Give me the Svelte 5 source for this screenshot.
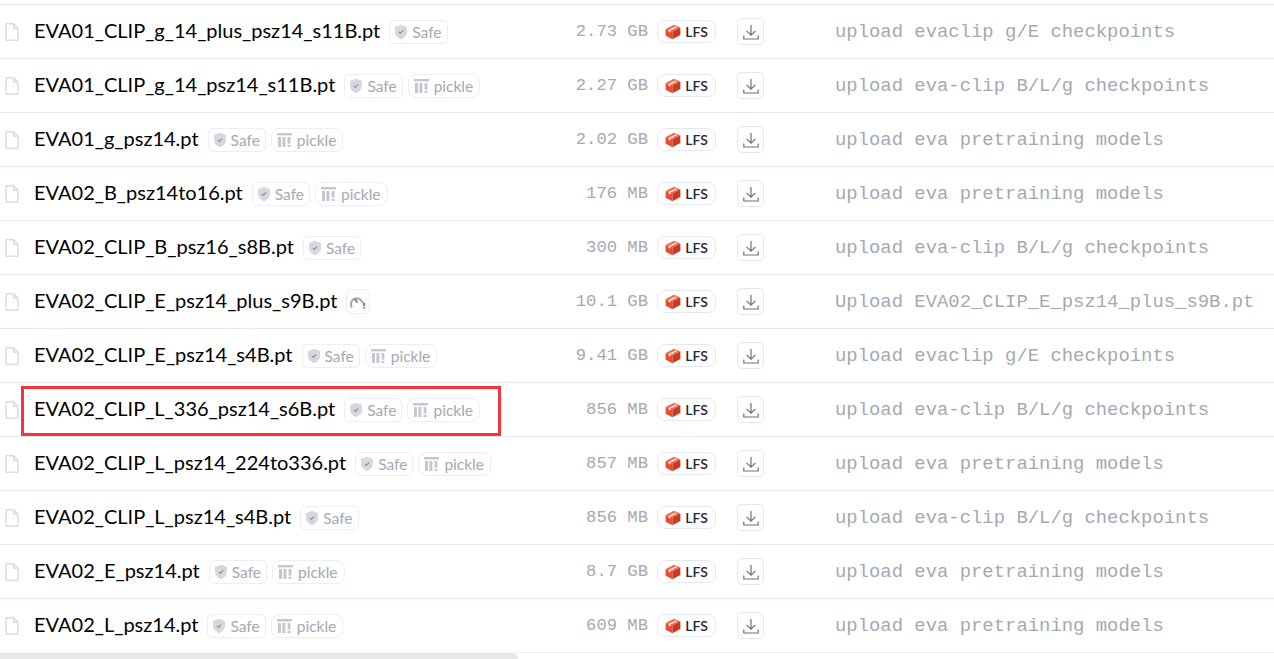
<script>
  const files = [
    { name: 'EVA01_CLIP_g_14_plus_psz14_s11B.pt', size: '2.73 GB', commit: 'upload evaclip g/E checkpoints', pickle: false },
    { name: 'EVA01_CLIP_g_14_psz14_s11B.pt', size: '2.27 GB', commit: 'upload eva-clip B/L/g checkpoints', pickle: true },
    { name: 'EVA01_g_psz14.pt', size: '2.02 GB', commit: 'upload eva pretraining models', pickle: true },
    { name: 'EVA02_B_psz14to16.pt', size: '176 MB', commit: 'upload eva pretraining models', pickle: true },
    { name: 'EVA02_CLIP_B_psz16_s8B.pt', size: '300 MB', commit: 'upload eva-clip B/L/g checkpoints', pickle: false },
    { name: 'EVA02_CLIP_E_psz14_plus_s9B.pt', size: '10.1 GB', commit: 'Upload EVA02_CLIP_E_psz14_plus_s9B.pt', pickle: false, unscanned: true },
    { name: 'EVA02_CLIP_E_psz14_s4B.pt', size: '9.41 GB', commit: 'upload evaclip g/E checkpoints', pickle: true },
    { name: 'EVA02_CLIP_L_336_psz14_s6B.pt', size: '856 MB', commit: 'upload eva-clip B/L/g checkpoints', pickle: true },
    { name: 'EVA02_CLIP_L_psz14_224to336.pt', size: '857 MB', commit: 'upload eva pretraining models', pickle: true },
    { name: 'EVA02_CLIP_L_psz14_s4B.pt', size: '856 MB', commit: 'upload eva-clip B/L/g checkpoints', pickle: false },
    { name: 'EVA02_E_psz14.pt', size: '8.7 GB', commit: 'upload eva pretraining models', pickle: true },
    { name: 'EVA02_L_psz14.pt', size: '609 MB', commit: 'upload eva pretraining models', pickle: true }
  ];
</script>

<div class="page">
  <ul class="list">
    {#each files as file}
      <li class="row">
        <div class="name-cell">
          <svg class="file-icon" viewBox="0 0 14 18" width="14" height="18" fill="none">
            <path d="M1 1.5 a.8 .8 0 0 1 .8-.8 H8.6 L13 5.2 V16.5 a.8 .8 0 0 1-.8 .8 H1.8 a.8 .8 0 0 1-.8-.8 Z M8.6 .8 V5.2 H13" stroke="#d9dce3" stroke-width="1.5" stroke-linejoin="round" />
          </svg>
          <span class="name">{file.name}</span>
          {#if file.unscanned}
            <span class="badge warn">
              <svg viewBox="0 0 16 14" width="16" height="14" fill="none">
                <path d="M2 12.5 A5.8 5.8 0 1 1 12.4 8" stroke="#a8adb7" stroke-width="2.2" />
                <path d="M7.4 7.6 L4.8 3.8" stroke="#5f6672" stroke-width="1.5" />
                <path d="M14 7.5 V11 M14 12 V13.6" stroke="#ef2b2b" stroke-width="1.6" />
              </svg>
            </span>
          {:else}
            <span class="badge safe">
              <svg viewBox="0 0 14 16" width="14" height="16">
                <path d="M7 .8 L13 3 V8 C13 11.6 10 14 7 15.2 C4 14 1 11.6 1 8 V3 Z" fill="#d5d8de" />
                <path d="M4.8 7.8 L6.4 9.4 L9.2 6.4" fill="none" stroke="#8b93a1" stroke-width="1.2" />
              </svg>
              Safe
            </span>
            {#if file.pickle}
              <span class="badge pickle">
                <svg viewBox="0 0 16 16" width="16" height="16" fill="#c3c7cf">
                  <rect x="0" y="1" width="15" height="2.4" />
                  <rect x="1" y="5" width="3" height="10" />
                  <rect x="5.4" y="5" width="3" height="10" />
                  <rect x="10.6" y="5" width="2.8" height="6.6" />
                  <rect x="10.6" y="12.8" width="2.8" height="2.2" />
                </svg>
                pickle
              </span>
            {/if}
          {/if}
        </div>
        <div class="size">{file.size}</div>
        <span class="lfs">
          <svg viewBox="0 0 16 16" width="16" height="16">
            <path d="M.6 5 L9 .8 L15.4 3.4 L7.4 7.4 Z" fill="#f2694c" />
            <path d="M.6 5 L7.4 7.4 V15.2 L.6 11.8 Z" fill="#ec4b30" />
            <path d="M7.4 7.4 L15.4 3.4 V11 L7.4 15.2 Z" fill="#c93a20" />
            <path d="M3.6 6.1 L10.6 2.4 L12.2 3 L5.4 6.7 Z" fill="#fff" />
            <path d="M3.6 6.1 L5.4 6.7 V8.4 L3.6 7.8 Z" fill="#fff" />
          </svg>
          LFS
        </span>
        <a class="download" href="#download" aria-label="Download">
          <svg viewBox="0 0 16 16" width="16" height="16" fill="none" stroke="#6b7280" stroke-width="1.2">
            <path d="M8 1 V11 M3.6 6.8 L8 11.2 L12.4 6.8 M.8 11.6 V15 H15.2 V11.6" />
          </svg>
        </a>
        <div class="commit">{file.commit}</div>
      </li>
    {/each}
  </ul>
  <div class="highlight"></div>
  <div class="scrollbar"><div class="thumb"></div></div>
</div>

<style>
  :global(body) {
    margin: 0;
    background: #fff;
    overflow: hidden;
  }
  .page {
    position: relative;
    height: 659px;
    padding-top: 4px;
    box-sizing: border-box;
    overflow: hidden;
  }
  .list {
    list-style: none;
    margin: 0;
    padding: 0;
    border-top: 1px solid #e8e9ee;
  }
  .row {
    display: flex;
    align-items: center;
    height: 54px;
    box-sizing: border-box;
    border-bottom: 1px solid #e8e9ee;
    white-space: nowrap;
  }
  .name-cell {
    width: 560px;
    display: flex;
    align-items: center;
    padding-left: 5px;
    box-sizing: border-box;
  }
  .file-icon {
    flex: none;
    margin-right: 15px;
  }
  .name {
    font: 20px "Lato", sans-serif;
    color: #000;
    margin-right: 9px;
    padding-bottom: 3px;
  }
  .badge {
    display: inline-flex;
    align-items: center;
    gap: 4px;
    height: 24px;
    box-sizing: border-box;
    border: 1px solid #eceef2;
    font: 15.5px "Lato", sans-serif;
    color: #a4a9b4;
  }
  .safe {
    border-radius: 5px;
    padding: 0 5px 0 4px;
    margin-right: 5px;
  }
  .pickle {
    border-radius: 8px;
    padding: 0 6px 0 5px;
  }
  .warn {
    width: 24px;
    height: 25px;
    border-radius: 5px;
    justify-content: center;
  }
  .size {
    width: 88px;
    text-align: right;
    font: 17.2px "Liberation Mono", monospace;
    color: #a4a9b4;
    flex: none;
  }
  .lfs {
    flex: none;
    width: 59px;
    height: 23px;
    margin-left: 9px;
    box-sizing: border-box;
    border: 1px solid #e8e9ee;
    border-radius: 8px;
    display: inline-flex;
    align-items: center;
    justify-content: center;
    gap: 4px;
    font: 600 14px "Lato", sans-serif;
    color: #1f2937;
  }
  .download {
    flex: none;
    width: 27px;
    height: 27px;
    margin-left: 21px;
    box-sizing: border-box;
    border: 1px solid #e5e7eb;
    border-radius: 5px;
    display: flex;
    align-items: center;
    justify-content: center;
  }
  .commit {
    margin-left: 71px;
    font: 18.9px "Liberation Mono", monospace;
    color: #a4a9b4;
  }
  .highlight {
    position: absolute;
    left: 21px;
    top: 386px;
    width: 480px;
    height: 50px;
    box-sizing: border-box;
    border: 3px solid #f7343a;
  }
  .scrollbar {
    position: absolute;
    left: 0;
    right: 0;
    bottom: 0;
    height: 7px;
    background: #fff;
    border-top: 1px solid #f0f0f0;
    box-sizing: border-box;
  }
  .thumb {
    width: 518px;
    height: 100%;
    background: #e8e8e8;
    border-radius: 0 6px 0 0;
  }
</style>
